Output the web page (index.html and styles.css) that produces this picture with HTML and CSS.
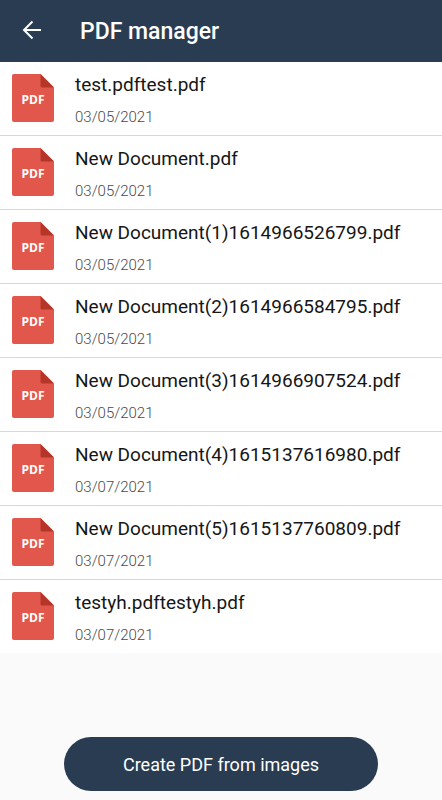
FILE: index.html
```html
<!DOCTYPE html>
<html lang="en">
<head>
<meta charset="utf-8">
<meta name="viewport" content="width=device-width, initial-scale=1">
<title>PDF manager</title>
<link rel="stylesheet" href="styles.css">
</head>
<body>
<svg class="defs" aria-hidden="true">
  <symbol id="pdf-file" viewBox="0 0 42 48">
    <path fill="#e2574c" d="M2 0h26.500L42 13.500V46a2 2 0 0 1-2 2H2a2 2 0 0 1-2-2V2a2 2 0 0 1 2-2z"/>
    <path fill="#b53629" d="M28.500 0L42 13.500H30a1.500 1.500 0 0 1-1.500-1.500z"/>
  </symbol>
</svg>
<header class="app-bar">
  <button class="back" type="button" aria-label="Back">
    <svg viewBox="0 0 20 20" width="20" height="20" fill="none" stroke="#fff" stroke-width="2"><path d="M19 10H2.500M10.500 1.500L2 10l8.500 8.500"/></svg>
  </button>
  <h1 class="title">PDF manager</h1>
</header>
<main class="content">
  <ul class="files">
    <li class="file"><span class="icon"><svg class="sheet"><use href="#pdf-file"/></svg><span class="type">PDF</span></span><div class="info"><span class="name">test.pdftest.pdf</span><time class="date">03/05/2021</time></div></li>
    <li class="file"><span class="icon"><svg class="sheet"><use href="#pdf-file"/></svg><span class="type">PDF</span></span><div class="info"><span class="name">New Document.pdf</span><time class="date">03/05/2021</time></div></li>
    <li class="file"><span class="icon"><svg class="sheet"><use href="#pdf-file"/></svg><span class="type">PDF</span></span><div class="info"><span class="name">New Document(1)1614966526799.pdf</span><time class="date">03/05/2021</time></div></li>
    <li class="file"><span class="icon"><svg class="sheet"><use href="#pdf-file"/></svg><span class="type">PDF</span></span><div class="info"><span class="name">New Document(2)1614966584795.pdf</span><time class="date">03/05/2021</time></div></li>
    <li class="file"><span class="icon"><svg class="sheet"><use href="#pdf-file"/></svg><span class="type">PDF</span></span><div class="info"><span class="name">New Document(3)1614966907524.pdf</span><time class="date">03/05/2021</time></div></li>
    <li class="file"><span class="icon"><svg class="sheet"><use href="#pdf-file"/></svg><span class="type">PDF</span></span><div class="info"><span class="name">New Document(4)1615137616980.pdf</span><time class="date">03/07/2021</time></div></li>
    <li class="file"><span class="icon"><svg class="sheet"><use href="#pdf-file"/></svg><span class="type">PDF</span></span><div class="info"><span class="name">New Document(5)1615137760809.pdf</span><time class="date">03/07/2021</time></div></li>
    <li class="file"><span class="icon"><svg class="sheet"><use href="#pdf-file"/></svg><span class="type">PDF</span></span><div class="info"><span class="name">testyh.pdftestyh.pdf</span><time class="date">03/07/2021</time></div></li>
  </ul>
</main>
<footer class="actions">
  <button class="create" type="button">Create PDF from images</button>
</footer>
</body>
</html>
```
FILE: styles.css
```css
* {
  box-sizing: border-box;
}

body {
  margin: 0;
  min-height: 100vh;
  display: flex;
  flex-direction: column;
  background: #fafafa;
  color: #161616;
  font-family: Roboto, sans-serif;
}

.defs {
  display: none;
}

.app-bar {
  display: flex;
  align-items: flex-start;
  gap: 28px;
  padding: 14px 12px 12px;
  background: #293c52;
  color: #fff;
}

.back {
  display: flex;
  padding: 6px 10px;
  border: 0;
  background: none;
}

.title {
  margin: 0;
  font-size: 23px;
  font-weight: 500;
  line-height: 36px;
}

.content {
  flex: 1;
}

.files {
  margin: 0;
  padding: 0;
  list-style: none;
  background: #fff;
}

.file {
  display: flex;
  align-items: center;
  gap: 21px;
  padding: 7px 12px 8px;
  border-bottom: 1px solid #d8d8d8;
}

.file:last-child {
  border-bottom: 0;
}

.icon {
  display: grid;
  flex: none;
  place-items: center;
}

.sheet,
.type {
  grid-area: 1 / 1;
}

.sheet {
  width: 42px;
  height: 48px;
}

.type {
  position: relative;
  padding-top: 4px;
  color: #fff;
  font: 700 12px/16px "Open Sans", sans-serif;
}

.info {
  display: flex;
  flex-direction: column;
  gap: 10px;
  padding-top: 4px;
}

.name {
  font-size: 19px;
  line-height: 24px;
}

.date {
  color: #4a4a4a;
  font-size: 15px;
  font-weight: 300;
  line-height: 20px;
}

.actions {
  display: flex;
  justify-content: center;
  padding: 9px 64px;
}

.create {
  flex: 1;
  max-width: 480px;
  padding: 16px 15px 14px;
  border: 0;
  border-radius: 27px;
  background: #293c52;
  color: #fff;
  font: 400 18px/24px Roboto, sans-serif;
}
```
